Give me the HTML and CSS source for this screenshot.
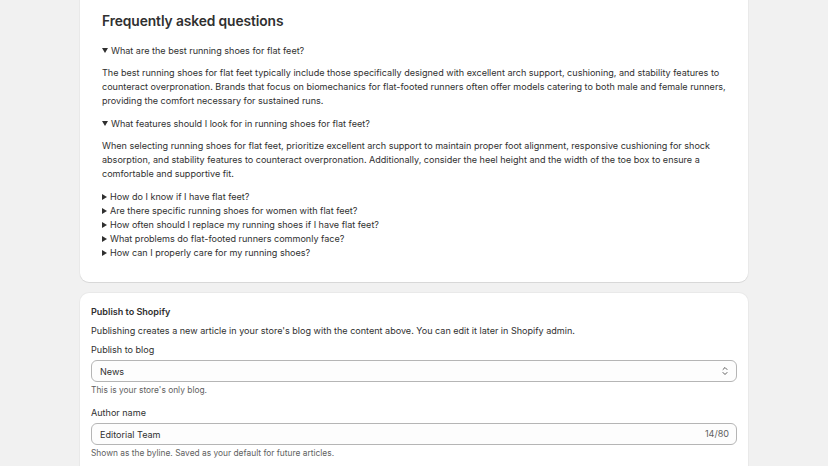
FILE: index.html
```html
<!DOCTYPE html>
<html lang="en">
<head>
<meta charset="UTF-8">
<meta name="viewport" content="width=device-width, initial-scale=1.0">
<title>Article FAQ</title>
<link rel="stylesheet" href="styles.css">
</head>
<body>
<div class="page">
    <!-- FAQ preview card -->
    <div class="card faq-card">
        <h2 class="faq-title">Frequently asked questions</h2>
        <details open>
            <summary>What are the best running shoes for flat feet?</summary>
            <p>The best running shoes for flat feet typically include those specifically designed with excellent arch support, cushioning, and stability features to counteract overpronation. Brands that focus on biomechanics for flat-footed runners often offer models catering to both male and female runners, providing the comfort necessary for sustained runs.</p>
        </details>
        <details open>
            <summary>What features should I look for in running shoes for flat feet?</summary>
            <p>When selecting running shoes for flat feet, prioritize excellent arch support to maintain proper foot alignment, responsive cushioning for shock absorption, and stability features to counteract overpronation. Additionally, consider the heel height and the width of the toe box to ensure a comfortable and supportive fit.</p>
        </details>
        <details>
            <summary>How do I know if I have flat feet?</summary>
            <p>Look at your footprint after stepping out of water.</p>
        </details>
        <details>
            <summary>Are there specific running shoes for women with flat feet?</summary>
            <p>Yes, many brands make women's stability models.</p>
        </details>
        <details>
            <summary>How often should I replace my running shoes if I have flat feet?</summary>
            <p>Every 300 to 500 miles is a common guideline.</p>
        </details>
        <details>
            <summary>What problems do flat-footed runners commonly face?</summary>
            <p>Overpronation, shin splints and knee pain are common.</p>
        </details>
        <details>
            <summary>How can I properly care for my running shoes?</summary>
            <p>Air them out and keep them away from direct heat.</p>
        </details>
    </div>

    <!-- Publish card -->
    <div class="card publish-card">
        <div class="card-heading">Publish to Shopify</div>
        <div class="card-text">Publishing creates a new article in your store's blog with the content above. You can edit it later in Shopify admin.</div>

        <div class="field">
            <label class="field-label" for="blogSelect">Publish to blog</label>
            <div class="select-wrap">
                <select id="blogSelect" class="select">
                    <option>News</option>
                </select>
                <svg class="select-icon" width="8" height="10" viewBox="0 0 8 10" fill="none" stroke="#5c5c5c" stroke-width="1" stroke-linecap="round" stroke-linejoin="round">
                    <path d="M2 3.5 4 1.5l2 2"/>
                    <path d="M2 6.5 4 8.5l2-2"/>
                </svg>
            </div>
            <div class="help-text">This is your store's only blog.</div>
        </div>

        <div class="field">
            <label class="field-label" for="authorInput">Author name</label>
            <div class="input-wrap">
                <input id="authorInput" class="text-input" type="text" value="Editorial Team" maxlength="80">
                <span class="char-count" id="charCount">14/80</span>
            </div>
            <div class="help-text">Shown as the byline. Saved as your default for future articles.</div>
        </div>
    </div>
</div>
<script>
// Keep the character counter in sync
const authorInput = document.getElementById('authorInput');
authorInput.addEventListener('input', () => {
    document.getElementById('charCount').textContent = `${authorInput.value.length}/80`;
});
</script>
</body>
</html>
```

FILE: styles.css
```css
body {
    font-family: Inter, "Noto Sans", Arial, sans-serif;
    background-color: #f1f1f1;
    color: #303030;
    margin: 0;
    font-size: 9.05px;
    line-height: 14px;
}
.page {
    width: 668px;
    margin-left: 80px;
    margin-top: -20px;
    display: flex;
    flex-direction: column;
    gap: 11px;
}
.card {
    background-color: #ffffff;
    border-radius: 9px;
    box-shadow: 0 1px 0 rgba(26, 26, 26, 0.08), 0 0 0 1px rgba(0, 0, 0, 0.03);
}
.faq-card {
    padding: 33px 20px 22px 22px;
}
.faq-title {
    margin: 0 0 14px;
    font-size: 13.8px;
    line-height: 17px;
    font-weight: 600;
    letter-spacing: -0.1px;
}
details p {
    margin: 8px 0 9px;
}
summary {
    cursor: pointer;
    list-style: none;
}
summary::-webkit-details-marker {
    display: none;
}
/* disclosure triangles */
summary::before {
    content: "";
    display: inline-block;
    width: 0;
    height: 0;
    margin-right: 3px;
    border-top: 3px solid transparent;
    border-bottom: 3px solid transparent;
    border-left: 5px solid #303030;
    vertical-align: 0;
}
details[open] > summary::before {
    border-left: 3px solid transparent;
    border-right: 3px solid transparent;
    border-top: 5px solid #303030;
    border-bottom: 0;
    vertical-align: 1px;
}
.publish-card {
    padding: 12px 11px 12px;
}
.card-heading {
    font-weight: 600;
    margin-bottom: 5px;
}
.card-text {
    margin-bottom: 5px;
}
.field {
    margin-bottom: 10px;
}
.field-label {
    display: block;
    margin-bottom: 3px;
}
.select-wrap,
.input-wrap {
    position: relative;
}
.select,
.text-input {
    display: block;
    width: 100%;
    box-sizing: border-box;
    height: 22px;
    padding: 0 8px;
    font-family: inherit;
    font-size: 9.05px;
    color: #303030;
    background-color: #fdfdfd;
    border: 1px solid #b5b5b5;
    border-radius: 6px;
    appearance: none;
    outline: none;
}
.select-icon {
    position: absolute;
    right: 8px;
    top: 6px;
    pointer-events: none;
}
.char-count {
    position: absolute;
    right: 8px;
    top: 4px;
    color: #616161;
}
.help-text {
    margin-top: 2px;
    font-size: 8.4px;
    line-height: 12px;
    color: #616161;
}
```
